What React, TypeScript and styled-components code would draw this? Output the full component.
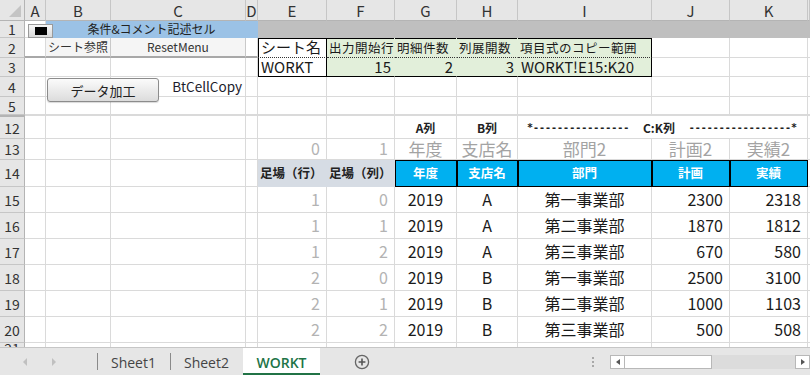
import React from 'react';
import styled, { createGlobalStyle, css } from 'styled-components';

const GlobalStyle = createGlobalStyle`
	html, body {
		margin: 0;
		padding: 0;
		background: #fff;
	}
	body {
		font-family: 'Noto Sans CJK JP', 'Noto Sans', sans-serif;
	}
`;

type Kind =
	| 'plain'
	| 'title'
	| 'band'
	| 'menu'
	| 'rule'
	| 'infoName'
	| 'infoHead'
	| 'infoVal'
	| 'note'
	| 'label'
	| 'hint'
	| 'ghost'
	| 'scaffold'
	| 'head'
	| 'data';

type Align = 'left' | 'center' | 'right';

interface CellSpec {
	col: number;
	span?: number;
	text?: React.ReactNode;
	kind?: Kind;
	align?: Align;
	frame?: string;
	dotted?: boolean;
}

interface RowSpec {
	n: string;
	gap?: boolean;
	cells: CellSpec[];
}

const COLUMNS = ['A', 'B', 'C', 'D', 'E', 'F', 'G', 'H', 'I', 'J', 'K', ''];
const WIDTHS = [21, 65, 135, 12, 69, 68, 62, 61, 134, 78, 78, 2];
const HEIGHTS = [21, 17, 20, 19, 20, 18, 24, 21, 27, 26, 26, 26, 26, 26, 26, 6];

const kinds: Record<Kind, ReturnType<typeof css>> = {
	plain: css``,
	title: css`
		background: #9bc2e6;
		border-color: #9bc2e6;
		font-size: 12px;
		color: #222;
	`,
	band: css`
		background: #bfbfbf;
		border-color: #bfbfbf;
	`,
	menu: css`
		background: #f5f5f5;
		border-right-color: #c9c9c9;
		border-bottom: 2px solid #a8a8a8;
		font-size: 12px;
		color: #333;
	`,
	rule: css`
		border-bottom: 2px solid #a8a8a8;
	`,
	infoName: css`
		font-size: 15px;
		padding: 0 3px;
	`,
	infoHead: css`
		background: #e2efda;
		border-color: #e2efda;
		font-size: 12.5px;
		letter-spacing: 0.5px;
		padding: 0 2px;
	`,
	infoVal: css`
		background: #e2efda;
		border-color: #e2efda;
		font-size: 15px;
		padding: 0 3px;
	`,
	note: css`
		font-size: 13.5px;
		color: #1c1c2c;
		padding: 0 3px;
	`,
	label: css`
		font-size: 12px;
		font-weight: 700;
		color: #222;
	`,
	hint: css`
		font-size: 17px;
		color: #a3a3a3;
	`,
	ghost: css`
		font-size: 16px;
		color: #b3b3b3;
		padding: 0 6px;
	`,
	scaffold: css`
		background: #d6dce4;
		border-color: #d6dce4;
		font-size: 12.5px;
		font-weight: 700;
		color: #222;
		padding: 0 2px;
	`,
	head: css`
		background: #00b0f0;
		border-color: #000;
		box-shadow: inset 1px 1px 0 #000;
		font-size: 12.5px;
		font-weight: 700;
		color: #fff;
	`,
	data: css`
		font-size: 16px;
		padding: 0 6px;
	`,
};

const justify: Record<Align, string> = {
	left: 'flex-start',
	center: 'center',
	right: 'flex-end',
};

const frame = (f?: string) => {
	if (!f) return css``;
	const shadows = [
		f.includes('t') ? 'inset 0 1px 0 #000' : '',
		f.includes('l') ? 'inset 1px 0 0 #000' : '',
	].filter(Boolean);
	return css`
		${f.includes('r') ? 'border-right-color: #000;' : ''}
		${f.includes('b') ? 'border-bottom-color: #000;' : ''}
		box-shadow: ${shadows.length ? shadows.join(', ') : 'none'};
	`;
};

const Sheet = styled.div`
	position: relative;
	height: 347px;
	overflow: hidden;
	display: grid;
	grid-template-columns: 25px ${WIDTHS.map((w) => `${w}px`).join(' ')};
	grid-template-rows: ${HEIGHTS.map((h) => `${h}px`).join(' ')};
	align-content: start;
`;

const Corner = styled.div`
	box-sizing: border-box;
	background: #e6e6e6;
	border-right: 1px solid #b4b4b4;
	border-bottom: 1px solid #b4b4b4;
	position: relative;
	&::after {
		content: '';
		position: absolute;
		right: 3px;
		bottom: 3px;
		border-left: 12px solid transparent;
		border-bottom: 12px solid #c4c4c4;
	}
`;

const ColHead = styled.div`
	box-sizing: border-box;
	background: #e6e6e6;
	border-right: 1px solid #c6c6c6;
	border-bottom: 1px solid #b4b4b4;
	display: flex;
	align-items: center;
	justify-content: center;
	font-size: 15px;
	line-height: 1;
	color: #333;
`;

const RowHead = styled.div<{ $gap?: boolean; $clip?: boolean }>`
	box-sizing: border-box;
	background: #e6e6e6;
	border-right: 1px solid #b4b4b4;
	border-bottom: 1px solid #c6c6c6;
	display: flex;
	align-items: ${(p) => (p.$clip ? 'flex-start' : 'center')};
	justify-content: center;
	font-size: 14px;
	line-height: ${(p) => (p.$clip ? '10px' : '1')};
	color: #333;
	overflow: ${(p) => (p.$clip ? 'hidden' : 'visible')};
	${(p) =>
		p.$gap &&
		css`
			border-top: 2px solid #b4b4b4;
		`}
`;

const Cell = styled.div<{
	$kind: Kind;
	$align: Align;
	$frame?: string;
	$dotted?: boolean;
	$gap?: boolean;
}>`
	box-sizing: border-box;
	min-width: 0;
	display: flex;
	align-items: center;
	justify-content: ${(p) => justify[p.$align]};
	padding: 0 4px;
	white-space: nowrap;
	font-size: 16px;
	line-height: 1.1;
	color: #1a1a1a;
	background: #fff;
	border-right: 1px solid #dadada;
	border-bottom: 1px solid #dadada;
	${(p) => kinds[p.$kind]}
	${(p) => frame(p.$frame)}
	${(p) =>
		p.$dotted &&
		css`
			border-bottom: 1px dotted #333;
		`}
	${(p) =>
		p.$gap &&
		css`
			border-top: 1px solid #dadada;
			padding-top: 1px;
		`}
`;

const Rule = styled.div`
	flex: 1;
	display: flex;
	align-items: center;
	justify-content: space-between;
	padding: 0 6px 0 5px;
	font-size: 12px;
	font-weight: 700;
	color: #222;
`;

const Dashes = styled.span`
	font-family: 'DejaVu Sans Mono', monospace;
	font-size: 10px;
	font-weight: 700;
`;

const StopButton = styled.div`
	position: absolute;
	left: 28px;
	top: 24px;
	width: 25px;
	height: 14px;
	box-sizing: border-box;
	border: 1px solid #9a9a9a;
	background: linear-gradient(#f6f6f6, #d9d9d9);
	display: flex;
	align-items: center;
	justify-content: center;
	&::after {
		content: '';
		width: 12px;
		height: 8px;
		background: #000;
	}
`;

const FormButton = styled.div`
	position: absolute;
	left: 47px;
	top: 78px;
	width: 112px;
	height: 24px;
	box-sizing: border-box;
	border: 1px solid #8c8c8c;
	border-radius: 3px;
	background: linear-gradient(#fbfbfb, #dcdcdc);
	box-shadow: 0 1px 1px rgba(0, 0, 0, 0.15);
	display: flex;
	align-items: center;
	justify-content: center;
	font-size: 13px;
	color: #222;
`;

const TabBar = styled.div`
	height: 28px;
	display: flex;
	align-items: center;
	background: #e6e6e6;
	border-top: 1px solid #c6c6c6;
	overflow: hidden;
	font-family: 'Open Sans', 'Noto Sans', sans-serif;
`;

const Nav = styled.div`
	width: 97px;
	height: 100%;
	box-sizing: border-box;
	display: flex;
	align-items: center;
	padding-left: 23px;
	gap: 25px;
`;

const Arrow = styled.span<{ $dir: 'left' | 'right' }>`
	width: 0;
	height: 0;
	border-top: 4px solid transparent;
	border-bottom: 4px solid transparent;
	${(p) =>
		p.$dir === 'left'
			? 'border-right: 4px solid #c0c0c0;'
			: 'border-left: 4px solid #c0c0c0;'}
`;

const SheetTab = styled.div<{ $active?: boolean; $sep?: boolean }>`
	position: relative;
	width: ${(p) => (p.$active ? 77 : 73)}px;
	height: 100%;
	box-sizing: border-box;
	display: flex;
	align-items: center;
	justify-content: center;
	font-size: 14px;
	color: #444;
	${(p) =>
		p.$active &&
		css`
			background: #fff;
			color: #217346;
			font-weight: 600;
			border-bottom: 3px solid #217346;
			padding-top: 3px;
		`}
	${(p) =>
		p.$sep &&
		css`
			&::before {
				content: '';
				position: absolute;
				left: 0;
				top: 5px;
				height: 17px;
				border-left: 1px solid #8a8a8a;
			}
		`}
`;

const AddTab = styled.div`
	width: 84px;
	height: 100%;
	display: flex;
	align-items: center;
	justify-content: center;
`;

const Spacer = styled.div`
	flex: 1;
`;

const Grip = styled.div`
	width: 22px;
	margin-right: 6px;
	display: flex;
	flex-direction: column;
	align-items: center;
	gap: 2px;
	span {
		width: 2px;
		height: 2px;
		background: #a8a8a8;
	}
`;

const Scroll = styled.div`
	width: 200px;
	flex-shrink: 0;
	height: 14px;
	display: flex;
	background: #dcdcdc;
`;

const ScrollButton = styled.div`
	width: 15px;
	box-sizing: border-box;
	border: 1px solid #b8b8b8;
	background: #fff;
	display: flex;
	align-items: center;
	justify-content: center;
	flex-shrink: 0;
`;

const Thumb = styled.div`
	width: 87px;
	box-sizing: border-box;
	border: 1px solid #b8b8b8;
	border-left: none;
	background: #fff;
`;

const Track = styled.div`
	flex: 1;
`;

const Tip = styled.span<{ $dir: 'left' | 'right' }>`
	width: 0;
	height: 0;
	border-top: 3px solid transparent;
	border-bottom: 3px solid transparent;
	${(p) =>
		p.$dir === 'left'
			? 'border-right: 4px solid #555;'
			: 'border-left: 4px solid #555;'}
`;

const rows: RowSpec[] = [
	{
		n: '1',
		cells: [
			{ col: 1, span: 3, text: '条件&コメント記述セル', kind: 'title', align: 'center' },
			{ col: 4, span: 8, kind: 'band' },
		],
	},
	{
		n: '2',
		cells: [
			{ col: 0, kind: 'rule' },
			{ col: 1, text: 'シート参照', kind: 'menu', align: 'center' },
			{ col: 2, text: 'ResetMenu', kind: 'menu', align: 'center' },
			{ col: 3, kind: 'rule' },
			{ col: 4, text: 'シート名', kind: 'infoName', frame: 'tlr', dotted: true },
			{ col: 5, text: '出力開始行', kind: 'infoHead', frame: 't', dotted: true },
			{ col: 6, text: '明細件数', kind: 'infoHead', frame: 't', dotted: true },
			{ col: 7, text: '列展開数', kind: 'infoHead', frame: 't', dotted: true },
			{ col: 8, text: '項目式のコピー範囲', kind: 'infoHead', frame: 'tr', dotted: true },
		],
	},
	{
		n: '3',
		cells: [
			{ col: 4, text: 'WORKT', kind: 'infoName', frame: 'lrb' },
			{ col: 5, text: '15', kind: 'infoVal', align: 'right', frame: 'b' },
			{ col: 6, text: '2', kind: 'infoVal', align: 'right', frame: 'b' },
			{ col: 7, text: '3', kind: 'infoVal', align: 'right', frame: 'b' },
			{ col: 8, text: 'WORKT!E15:K20', kind: 'infoVal', frame: 'rb' },
		],
	},
	{ n: '4', cells: [{ col: 2, text: 'BtCellCopy', kind: 'note', align: 'right' }] },
	{ n: '5', cells: [] },
	{
		n: '12',
		gap: true,
		cells: [
			{ col: 6, text: 'A列', kind: 'label', align: 'center' },
			{ col: 7, text: 'B列', kind: 'label', align: 'center' },
			{
				col: 8,
				span: 3,
				kind: 'label',
				text: (
					<Rule>
						<Dashes>*----------------</Dashes>
						<span>C:K列</span>
						<Dashes>-----------------*</Dashes>
					</Rule>
				),
			},
		],
	},
	{
		n: '13',
		cells: [
			{ col: 4, text: '0', kind: 'ghost', align: 'right' },
			{ col: 5, text: '1', kind: 'ghost', align: 'right' },
			{ col: 6, text: '年度', kind: 'hint', align: 'center' },
			{ col: 7, text: '支店名', kind: 'hint', align: 'center' },
			{ col: 8, text: '部門2', kind: 'hint', align: 'center' },
			{ col: 9, text: '計画2', kind: 'hint', align: 'center' },
			{ col: 10, text: '実績2', kind: 'hint', align: 'center' },
		],
	},
	{
		n: '14',
		cells: [
			{ col: 4, text: '足場（行）', kind: 'scaffold' },
			{ col: 5, text: '足場（列）', kind: 'scaffold' },
			{ col: 6, text: '年度', kind: 'head', align: 'center' },
			{ col: 7, text: '支店名', kind: 'head', align: 'center' },
			{ col: 8, text: '部門', kind: 'head', align: 'center' },
			{ col: 9, text: '計画', kind: 'head', align: 'center' },
			{ col: 10, text: '実績', kind: 'head', align: 'center' },
		],
	},
];

const records = [
	[1, 0, 'A', '第一事業部', 2300, 2318],
	[1, 1, 'A', '第二事業部', 1870, 1812],
	[1, 2, 'A', '第三事業部', 670, 580],
	[2, 0, 'B', '第一事業部', 2500, 3100],
	[2, 1, 'B', '第二事業部', 1000, 1103],
	[2, 2, 'B', '第三事業部', 500, 508],
];

records.forEach(([r, c, branch, dept, plan, actual], i) => {
	rows.push({
		n: String(15 + i),
		cells: [
			{ col: 4, text: r, kind: 'ghost', align: 'right' },
			{ col: 5, text: c, kind: 'ghost', align: 'right' },
			{ col: 6, text: '2019', kind: 'data', align: 'center' },
			{ col: 7, text: branch, kind: 'data', align: 'center' },
			{ col: 8, text: dept, kind: 'data', align: 'center' },
			{ col: 9, text: plan, kind: 'data', align: 'right' },
			{ col: 10, text: actual, kind: 'data', align: 'right' },
		],
	});
});

rows.push({ n: '21', cells: [] });

const SheetRow = ({ row }: { row: RowSpec }) => {
	const out: JSX.Element[] = [
		<RowHead key='h' $gap={row.gap} $clip={row.n === '21'}>
			{row.n}
		</RowHead>,
	];
	let col = 0;
	while (col < COLUMNS.length) {
		const spec = row.cells.find((c) => c.col === col);
		const span = spec?.span ?? 1;
		out.push(
			<Cell
				key={col}
				$kind={spec?.kind ?? 'plain'}
				$align={spec?.align ?? 'left'}
				$frame={spec?.frame}
				$dotted={spec?.dotted}
				$gap={row.gap}
				style={span > 1 ? { gridColumn: `span ${span}` } : undefined}
			>
				{spec?.text}
			</Cell>
		);
		col += span;
	}
	return <>{out}</>;
};

const PlusIcon = () => (
	<svg width='16' height='16' viewBox='0 0 16 16'>
		<circle cx='8' cy='8' r='6.6' fill='none' stroke='#666' strokeWidth='1.3' />
		<path d='M8 4.6v6.8M4.6 8h6.8' stroke='#555' strokeWidth='1.6' />
	</svg>
);

export default function App(): JSX.Element {
	return (
		<>
			<GlobalStyle />
			<Sheet>
				<Corner />
				{COLUMNS.map((c, i) => (
					<ColHead key={i}>{c}</ColHead>
				))}
				{rows.map((row) => (
					<SheetRow key={row.n} row={row} />
				))}
				<StopButton />
				<FormButton>データ加工</FormButton>
			</Sheet>
			<TabBar>
				<Nav>
					<Arrow $dir='left' />
					<Arrow $dir='right' />
				</Nav>
				<SheetTab $sep>Sheet1</SheetTab>
				<SheetTab $sep>Sheet2</SheetTab>
				<SheetTab $active>WORKT</SheetTab>
				<AddTab>
					<PlusIcon />
				</AddTab>
				<Spacer />
				<Grip>
					<span />
					<span />
					<span />
				</Grip>
				<Scroll>
					<ScrollButton>
						<Tip $dir='left' />
					</ScrollButton>
					<Thumb />
					<Track />
					<ScrollButton>
						<Tip $dir='right' />
					</ScrollButton>
				</Scroll>
			</TabBar>
		</>
	);
}
